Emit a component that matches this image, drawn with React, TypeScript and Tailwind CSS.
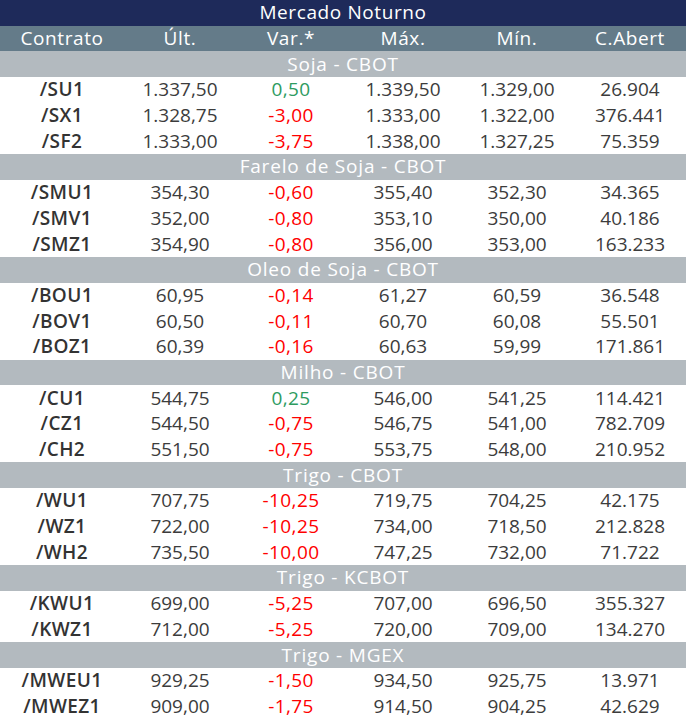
import React from "react";

type Row = [string, string, string, string, string, string];
type Section = { title: string; rows: Row[] };

const data: Section[] = [
  {
    title: "Soja - CBOT",
    rows: [
      ["/SU1", "1.337,50", "0,50", "1.339,50", "1.329,00", "26.904"],
      ["/SX1", "1.328,75", "-3,00", "1.333,00", "1.322,00", "376.441"],
      ["/SF2", "1.333,00", "-3,75", "1.338,00", "1.327,25", "75.359"],
    ],
  },
  {
    title: "Farelo de Soja - CBOT",
    rows: [
      ["/SMU1", "354,30", "-0,60", "355,40", "352,30", "34.365"],
      ["/SMV1", "352,00", "-0,80", "353,10", "350,00", "40.186"],
      ["/SMZ1", "354,90", "-0,80", "356,00", "353,00", "163.233"],
    ],
  },
  {
    title: "Oleo de Soja - CBOT",
    rows: [
      ["/BOU1", "60,95", "-0,14", "61,27", "60,59", "36.548"],
      ["/BOV1", "60,50", "-0,11", "60,70", "60,08", "55.501"],
      ["/BOZ1", "60,39", "-0,16", "60,63", "59,99", "171.861"],
    ],
  },
  {
    title: "Milho - CBOT",
    rows: [
      ["/CU1", "544,75", "0,25", "546,00", "541,25", "114.421"],
      ["/CZ1", "544,50", "-0,75", "546,75", "541,00", "782.709"],
      ["/CH2", "551,50", "-0,75", "553,75", "548,00", "210.952"],
    ],
  },
  {
    title: "Trigo - CBOT",
    rows: [
      ["/WU1", "707,75", "-10,25", "719,75", "704,25", "42.175"],
      ["/WZ1", "722,00", "-10,25", "734,00", "718,50", "212.828"],
      ["/WH2", "735,50", "-10,00", "747,25", "732,00", "71.722"],
    ],
  },
  {
    title: "Trigo - KCBOT",
    rows: [
      ["/KWU1", "699,00", "-5,25", "707,00", "696,50", "355.327"],
      ["/KWZ1", "712,00", "-5,25", "720,00", "709,00", "134.270"],
    ],
  },
  {
    title: "Trigo - MGEX",
    rows: [
      ["/MWEU1", "929,25", "-1,50", "934,50", "925,75", "13.971"],
      ["/MWEZ1", "909,00", "-1,75", "914,50", "904,25", "42.629"],
    ],
  },
];

const grid = "grid grid-cols-[124px_112px_110px_114px_114px_112px] items-center h-[25.7px]";

export default function App() {
  return (
    <div
      className="w-[686px] h-[721px] bg-white text-[19px] leading-none"
      style={{ fontFamily: "'Open Sans', Lato, sans-serif" }}
    >
      <div className="h-[25.7px] bg-[#1e2a5a] text-white flex items-center justify-center tracking-[0.6px]">
        Mercado Noturno
      </div>
      <div className={`${grid} bg-[#647b89] text-white text-center tracking-[0.6px]`}>
        <div>Contrato</div>
        <div>Últ.</div>
        <div>Var.*</div>
        <div>Máx.</div>
        <div>Mín.</div>
        <div>C.Abert</div>
      </div>
      {data.map((s) => (
        <div key={s.title}>
          <div className="h-[25.7px] bg-[#b3babf] text-white flex items-center justify-center tracking-[0.8px]">
            {s.title}
          </div>
          {s.rows.map((r) => (
            <div key={r[0]} className={`${grid} text-center text-[#3c3c3c]`}>
              <div className="text-[#333333] font-semibold tracking-[0.4px]">{r[0]}</div>
              <div>{r[1]}</div>
              <div
                className={
                  r[2].startsWith("-")
                    ? "text-[#ff0000] tracking-[0.4px]"
                    : "text-[#2e9b5f] tracking-[0.4px]"
                }
              >
                {r[2]}
              </div>
              <div>{r[3]}</div>
              <div>{r[4]}</div>
              <div>{r[5]}</div>
            </div>
          ))}
        </div>
      ))}
    </div>
  );
}
